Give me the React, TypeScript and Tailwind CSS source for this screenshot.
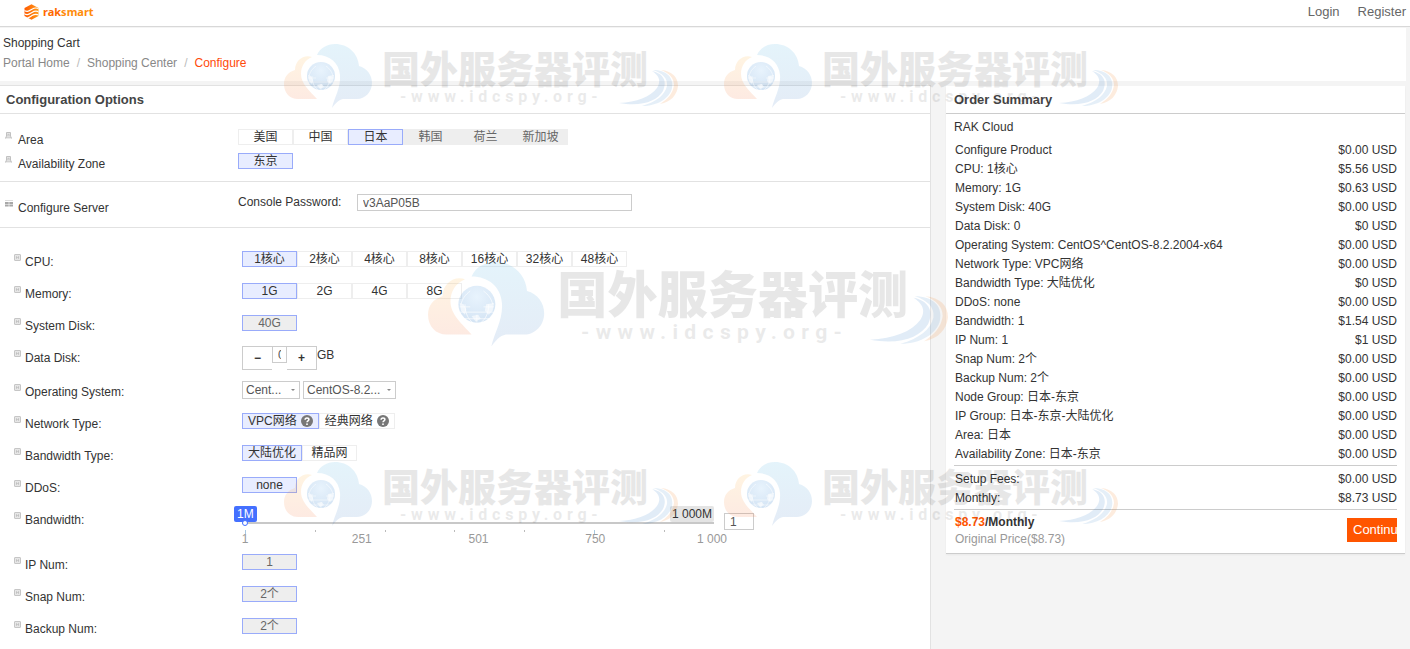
import React, { useState } from "react";

const SANS = "font-['Liberation_Sans','Noto_Sans_CJK_SC',sans-serif]";

function Logo() {
  return (
    <a href="#" className="flex items-center gap-1" aria-label="raksmart">
      <svg width="15" height="16" viewBox="0 0 15 16" aria-hidden="true">
        <defs>
          <linearGradient id="logo" x1="0" y1="0" x2="1" y2="0">
            <stop offset="0" stopColor="#ff5a00" />
            <stop offset="1" stopColor="#ff9a1a" />
          </linearGradient>
          <clipPath id="hex">
            <path d="M7.500 .3L14.500 4V12L7.500 15.700L.5 12V4Z" />
          </clipPath>
        </defs>
        <path d="M7.500 .3L14.500 4V12L7.500 15.700L.5 12V4Z" fill="url(#logo)" />
        <g clipPath="url(#hex)" fill="none" stroke="#fff" strokeWidth="1.200">
          <path d="M-1 5.500C3 9 5 7 8 5.200S13 3.200 16 5.600" />
          <path d="M-1 8.700C3 12.200 5 10.200 8 8.400S13 6.400 16 8.800" />
          <path d="M-1 11.900C3 15.400 5 13.400 8 11.600S13 9.600 16 12" />
        </g>
      </svg>
      <span className="font-['Noto_Sans',sans-serif] text-[11px] leading-4 font-bold text-[#ff8c0a]">
        <span className="text-[#ff6a00]">rak</span>smart
      </span>
    </a>
  );
}

function Watermark({ className }: { className: string }) {
  return (
    <svg
      className={`pointer-events-none absolute ${className}`}
      viewBox="0 0 394 64"
      aria-hidden="true"
    >
      <defs>
        <linearGradient id="wmBlue" x1="0" y1="0" x2="0" y2="1">
          <stop offset="0" stopColor="#1ea0dc" />
          <stop offset="1" stopColor="#2060b8" />
        </linearGradient>
        <linearGradient id="wmOrange" x1="0" y1="0" x2="0" y2="1">
          <stop offset="0" stopColor="#ffb030" />
          <stop offset="1" stopColor="#f26a30" />
        </linearGradient>
        <radialGradient id="wmGlobe" cx="0.5" cy="0.3" r="0.7">
          <stop offset="0" stopColor="#8cc4f4" />
          <stop offset="1" stopColor="#2878c8" />
        </radialGradient>
      </defs>
      <path
        opacity="0.12"
        fill="url(#wmBlue)"
        d="M33 11C36 4 43 0 51 0C64 0 74 9 75 22C83 24 88 31 88 39C88 48 81 55 73 55H59C54 56 51 60 48 64C50 54 57 44 56 31C55 19 46 11 33 11Z"
      />
      <path
        opacity="0.14"
        fill="url(#wmOrange)"
        d="M28 13C20 10 11 16 11 26C4 28 0 33 0 40C0 49 6 55 14 55H33C26 47 17 40 17 30C17 22 21 16 28 13Z"
      />
      <circle cx="37" cy="32" r="14" fill="url(#wmGlobe)" opacity="0.2" />
      <g fill="none" stroke="#fff" strokeWidth="0.700" opacity="0.7">
        <path d="M24 38H50M27 43H47M24 34H32M42 34H50M37 40V46M28 32C28 38 30 43 34 46M46 32C46 38 44 43 40 46M32 22C28 25 26 28 25 32M42 22C46 25 48 28 49 32" />
      </g>
      <path
        fill="#fff"
        opacity="0.6"
        d="M24 31L27 32L29 36L28 40L25 37ZM44 32L50 31L49 37L46 40L43 37ZM33 41L38 40L40 43L36 45Z"
      />
      <text
        x="98"
        y="39"
        fill="#000"
        opacity="0.09"
        className="font-['Noto_Sans_CJK_SC',sans-serif] text-[38px] font-black"
      >
        国外服务器评测
      </text>
      <text
        x="116"
        y="58"
        fill="#000"
        opacity="0.08"
        className="font-[Roboto,sans-serif] text-[16px] font-bold tracking-[0.3em]"
      >
        -www.idcspy.org-
      </text>
      <path
        opacity="0.14"
        fill="#2878c8"
        d="M368 27C378 29 384 36 379 47C373 57 358 63 335 59C353 58 366 53 373 44C378 36 374 31 368 27Z"
      />
      <path
        opacity="0.12"
        fill="#2878c8"
        d="M369 26C382 26 390 33 388 44C386 54 374 62 358 62C372 58 381 51 383 42C384 34 378 29 369 26Z"
      />
      <path
        opacity="0.16"
        fill="#f28a30"
        d="M377 26C388 27 394 33 394 42C393 51 387 58 376 60C384 55 389 49 390 41C390 34 385 29 377 26Z"
      />
    </svg>
  );
}

type Opt = { text: string; disabled?: boolean; help?: boolean };

function Options({ items, initial = 0 }: { items: Opt[]; initial?: number }) {
  const [active, setActive] = useState(initial);
  return (
    <div className="flex">
      {items.map((o, i) => {
        const border = i === active ? "border-[#99abfa]" : "border-[#eee]";
        const bg = o.disabled ? "bg-[#eee] text-[#666]" : i === active ? "bg-[#e8edff]" : "bg-white";
        return (
          <button
            key={o.text}
            type="button"
            disabled={o.disabled}
            onClick={() => setActive(i)}
            className={`flex h-4 min-w-[55px] items-center justify-center border px-[5px] text-xs leading-[14px] whitespace-nowrap ${border} ${bg}`}
          >
            {o.text}
            {o.help && <HelpIcon />}
          </button>
        );
      })}
    </div>
  );
}

function HelpIcon() {
  return (
    <svg width="12" height="12" viewBox="0 0 12 12" className="ml-1" aria-hidden="true">
      <circle cx="6" cy="6" r="6" fill="#777" />
      <path
        d="M4.100 4.700C4.100 2.300 7.900 2.400 7.900 4.600C7.900 5.900 6 5.900 6 7.300"
        fill="none"
        stroke="#fff"
        strokeWidth="1.500"
      />
      <circle cx="6" cy="9.200" r="0.900" fill="#fff" />
    </svg>
  );
}

function BoxIcon() {
  return (
    <svg width="7" height="7" viewBox="0 0 7 7" className="shrink-0" aria-hidden="true">
      <rect x="0.500" y="0.500" width="6" height="6" rx="0.500" fill="#e6e6e6" stroke="#c6c6c6" />
      <path d="M2 3.500H5M2.500 2V5M4.500 2V5" stroke="#bbb" strokeWidth="0.600" />
    </svg>
  );
}

function PinIcon() {
  return (
    <svg width="7" height="7" viewBox="0 0 7 7" className="shrink-0" aria-hidden="true">
      <path
        d="M1.500 .5H5.500V4H1.500ZM.5 6.500L1.500 4M6.500 6.500L5.500 4M.5 5.800H6.500M2.500 2.300H4.500"
        fill="#e8e8e8"
        stroke="#bbb"
        strokeWidth="0.900"
      />
    </svg>
  );
}

function ServerIcon() {
  return (
    <svg width="8" height="8" viewBox="0 0 8 8" className="shrink-0" aria-hidden="true">
      <path d="M0 .5H8" stroke="#ddd" />
      <path d="M0 3H8M0 5.500H8" stroke="#a8a8a8" strokeWidth="1.800" strokeDasharray="3.700 .6" />
    </svg>
  );
}

function Row({ label, children, tall = "min-h-8" }: { label: string; children: React.ReactNode; tall?: string }) {
  return (
    <div className={`flex items-start ${tall}`}>
      <div className="flex w-[242px] shrink-0 gap-1 pt-[11px] pl-[14px]">
        <BoxIcon />
        <span className="leading-4">{label}</span>
      </div>
      <div className="pt-2">{children}</div>
    </div>
  );
}

function AreaRow({ label, children }: { label: string; children: React.ReactNode }) {
  return (
    <div className="flex min-h-6 items-start">
      <div className="flex w-[238px] shrink-0 gap-[6px] pt-[3px] pl-[5px]">
        <PinIcon />
        <span className="leading-4">{label}</span>
      </div>
      {children}
    </div>
  );
}

function Picker({ label, options, width }: { label: string; options: string[]; width: string }) {
  return (
    <div className={`relative ${width}`}>
      <select
        aria-label={label}
        className="block h-[18px] w-full appearance-none border border-[#ccc] bg-white pl-[3px] text-xs leading-4 text-[#555]"
      >
        {options.map((o) => (
          <option key={o}>{o}</option>
        ))}
      </select>
      <svg width="4" height="2" viewBox="0 0 4 2" className="pointer-events-none absolute top-2 right-[5px]" aria-hidden="true">
        <path d="M0 0H4L2 2Z" fill="#888" />
      </svg>
    </div>
  );
}

const majors = ["1", "251", "501", "750", "1 000"];

function BandwidthSlider() {
  const [value, setValue] = useState(1);
  return (
    <div className="-mt-[3px] -ml-2 flex items-start gap-[10px]">
      <div className="w-[480px]">
        <div className="flex justify-between leading-4">
          <span className="rounded-xs bg-[#4470ff] px-[3px] text-white">1M</span>
          <span className="rounded-xs bg-[#e1e1e1]/90 px-[2px]">1 000M</span>
        </div>
        <input
          type="range"
          aria-label="Bandwidth"
          min={1}
          max={1000}
          value={value}
          onChange={(e) => setValue(Number(e.target.value))}
          className="ml-2 block h-[2px] w-[472px] appearance-none bg-[#c8c8c8] [&::-webkit-slider-thumb]:h-[6px] [&::-webkit-slider-thumb]:w-[6px] [&::-webkit-slider-thumb]:appearance-none [&::-webkit-slider-thumb]:rounded-full [&::-webkit-slider-thumb]:border-[1px] [&::-webkit-slider-thumb]:border-[#4470ff] [&::-webkit-slider-thumb]:bg-white"
        />
        <div className="mt-[6px] mr-[49px] ml-[11px] flex h-1 justify-between" aria-hidden="true">
          <span className="h-1 w-px bg-[#a8c8e0]" />
          <span className="h-[2px] w-px bg-[#bbb]" />
          <span className="h-[2px] w-px bg-[#bbb]" />
          <span className="h-[2px] w-px bg-[#bbb]" />
          <span className="h-[2px] w-px bg-[#bbb]" />
          <span className="h-1 w-px bg-[#a8c8e0]" />
          <span className="h-[2px] w-px bg-[#bbb]" />
        </div>
        <div className="-mt-px mr-[2px] ml-[11px] flex justify-between leading-3 text-[#999]">
          {majors.map((m) => (
            <span key={m} className="flex w-0 justify-center whitespace-nowrap">
              {m}
            </span>
          ))}
        </div>
      </div>
      <input
        aria-label="Bandwidth value"
        value={value}
        onChange={(e) => setValue(Number(e.target.value) || 1)}
        className="mt-[7px] h-[17px] w-[30px] border border-[#ccc] bg-white/60 px-[5px] text-xs text-[#555]"
      />
    </div>
  );
}

const summary: [string, string][] = [
  ["Configure Product", "$0.00 USD"],
  ["CPU: 1核心", "$5.56 USD"],
  ["Memory: 1G", "$0.63 USD"],
  ["System Disk: 40G", "$0.00 USD"],
  ["Data Disk: 0", "$0 USD"],
  ["Operating System: CentOS^CentOS-8.2.2004-x64", "$0.00 USD"],
  ["Network Type: VPC网络", "$0.00 USD"],
  ["Bandwidth Type: 大陆优化", "$0 USD"],
  ["DDoS: none", "$0.00 USD"],
  ["Bandwidth: 1", "$1.54 USD"],
  ["IP Num: 1", "$1 USD"],
  ["Snap Num: 2个", "$0.00 USD"],
  ["Backup Num: 2个", "$0.00 USD"],
  ["Node Group: 日本-东京", "$0.00 USD"],
  ["IP Group: 日本-东京-大陆优化", "$0.00 USD"],
  ["Area: 日本", "$0.00 USD"],
  ["Availability Zone: 日本-东京", "$0.00 USD"],
];

const totals: [string, string][] = [
  ["Setup Fees:", "$0.00 USD"],
  ["Monthly:", "$8.73 USD"],
];

function PriceTable({ rows }: { rows: [string, string][] }) {
  return (
    <table className="w-full">
      <tbody>
        {rows.map(([name, price]) => (
          <tr key={name} className="h-[19px]">
            <td className="p-0 pl-px leading-[19px]">{name}</td>
            <td className="p-0 text-right leading-[19px] whitespace-nowrap">{price}</td>
          </tr>
        ))}
      </tbody>
    </table>
  );
}

export default function App() {
  const [password, setPassword] = useState("v3AaP05B");
  const [disk, setDisk] = useState(0);
  return (
    <div className={`relative min-h-screen overflow-hidden bg-[#f4f4f4] text-xs text-[#333] ${SANS}`}>
      <header className="flex h-[27px] items-center justify-between border-b border-[#d8d8d8] bg-white pr-1 pb-[3px] pl-6">
        <Logo />
        <nav className="flex gap-[18px] pt-px text-[13px] text-[#666]">
          <a href="#">Login</a>
          <a href="#">Register</a>
        </nav>
      </header>

      <div className="mt-px mr-1 bg-white pt-[5px] pb-2 pl-[3px]">
        <h1 className="leading-5">Shopping Cart</h1>
        <nav className="flex gap-[7px] leading-5 text-[#888]" aria-label="Breadcrumb">
          <a href="#">Portal Home</a>
          <span className="text-[#bbb]">/</span>
          <a href="#">Shopping Center</a>
          <span className="text-[#bbb]">/</span>
          <a href="#" className="text-[#ff4a0a]">Configure</a>
        </nav>
      </div>

      <div className="mt-1 flex items-start">
        <main className="min-h-[calc(100vh-85px)] flex-1 border-t border-r border-[#e2e2e2] bg-white">
          <h2 className="border-b border-[#e2e2e2] pl-[6px] text-[13px] leading-[27px] font-bold text-[#444]">
            Configuration Options
          </h2>

          <section className="border-b border-[#e2e2e2] pt-[15px] pb-1">
            <AreaRow label="Area">
              <Options
                initial={2}
                items={[
                  { text: "美国" },
                  { text: "中国" },
                  { text: "日本" },
                  { text: "韩国", disabled: true },
                  { text: "荷兰", disabled: true },
                  { text: "新加坡", disabled: true },
                ]}
              />
            </AreaRow>
            <AreaRow label="Availability Zone">
              <Options items={[{ text: "东京" }]} />
            </AreaRow>
          </section>

          <section className="flex items-start border-b border-[#e2e2e2] pt-3 pb-4">
            <div className="flex w-[238px] shrink-0 gap-[5px] pt-[6px] pl-[5px]">
              <ServerIcon />
              <span className="-mb-[5px] leading-4">Configure Server</span>
            </div>
            <label htmlFor="console-password" className="w-[119px] leading-4">
              Console Password:
            </label>
            <input
              id="console-password"
              value={password}
              onChange={(e) => setPassword(e.target.value)}
              className="h-[17px] w-[275px] border border-[#ccc] bg-white px-[5px] text-xs text-[#555]"
            />
          </section>

          <section className="pt-[15px]">
            <Row label="CPU:">
              <Options
                items={["1核心", "2核心", "4核心", "8核心", "16核心", "32核心", "48核心"].map((text) => ({ text }))}
              />
            </Row>
            <Row label="Memory:">
              <Options items={["1G", "2G", "4G", "8G"].map((text) => ({ text }))} />
            </Row>
            <Row label="System Disk:">
              <Options items={[{ text: "40G", disabled: true }]} />
            </Row>
            <Row label="Data Disk:" tall="min-h-[34px]">
              <div className="-mt-px flex items-start">
                <button
                  type="button"
                  aria-label="Decrease data disk"
                  onClick={() => setDisk(Math.max(0, disk - 1))}
                  className="h-6 w-[30px] border border-r-0 border-[#ccc] bg-white text-xs font-bold"
                >
                  −
                </button>
                <input
                  aria-label="Data disk size in GB"
                  value={disk}
                  onChange={(e) => setDisk(Number(e.target.value) || 0)}
                  className="h-[17px] w-[15px] border border-[#ccc] bg-white px-[5px] text-xs text-[#555]"
                />
                <button
                  type="button"
                  aria-label="Increase data disk"
                  onClick={() => setDisk(disk + 1)}
                  className="h-6 w-[30px] border border-l-0 border-[#ccc] bg-white text-xs font-bold"
                >
                  +
                </button>
                <span className="leading-[19px]">GB</span>
              </div>
            </Row>
            <Row label="Operating System:">
              <div className="flex gap-[3px]">
                <Picker label="Operating system" options={["Cent..."]} width="w-[58px]" />
                <Picker label="System version" options={["CentOS-8.2..."]} width="w-[93px]" />
              </div>
            </Row>
            <Row label="Network Type:">
              <Options
                items={[
                  { text: "VPC网络", help: true },
                  { text: "经典网络", help: true },
                ]}
              />
            </Row>
            <Row label="Bandwidth Type:">
              <Options items={[{ text: "大陆优化" }, { text: "精品网" }]} />
            </Row>
            <Row label="DDoS:">
              <Options items={[{ text: "none" }]} />
            </Row>
            <Row label="Bandwidth:" tall="min-h-[45px]">
              <BandwidthSlider />
            </Row>
            <Row label="IP Num:">
              <Options items={[{ text: "1", disabled: true }]} />
            </Row>
            <Row label="Snap Num:">
              <Options items={[{ text: "2个", disabled: true }]} />
            </Row>
            <Row label="Backup Num:">
              <Options items={[{ text: "2个", disabled: true }]} />
            </Row>
          </section>
        </main>

        <aside className="mt-px mr-[5px] ml-[15px] w-[459px] shrink-0 border-b border-[#ccc] bg-white shadow-xs">
          <h2 className="border-b border-[#ccc] pl-2 text-[13px] leading-[27px] font-bold text-[#444]">
            Order Summary
          </h2>
          <div className="px-2">
            <p className="pt-[3px] pb-1 leading-5">RAK Cloud</p>
            <PriceTable rows={summary} />
            <div className="mt-px border-y border-[#ccc] pt-1 pb-px">
              <PriceTable rows={totals} />
            </div>
            <div className="flex items-start justify-between pt-1 pb-[5px]">
              <div className="pl-px leading-[17px]">
                <p className="font-bold">
                  <span className="text-[#ff5500]">$8.73</span>/Monthly
                </p>
                <p className="text-[#999]">Original Price($8.73)</p>
              </div>
              <button
                type="button"
                className="mt-1 h-6 w-[50px] overflow-hidden bg-[#ff5500] pl-[6px] text-left text-[13px] text-white"
              >
                Continu
              </button>
            </div>
          </div>
        </aside>
      </div>

      <Watermark className="top-[44px] left-[284px] w-[394px]" />
      <Watermark className="top-[44px] left-[724px] w-[394px]" />
      <Watermark className="top-[262px] left-[428px] w-[520px]" />
      <Watermark className="top-[462px] left-[284px] w-[394px]" />
      <Watermark className="top-[462px] left-[724px] w-[394px]" />
    </div>
  );
}
